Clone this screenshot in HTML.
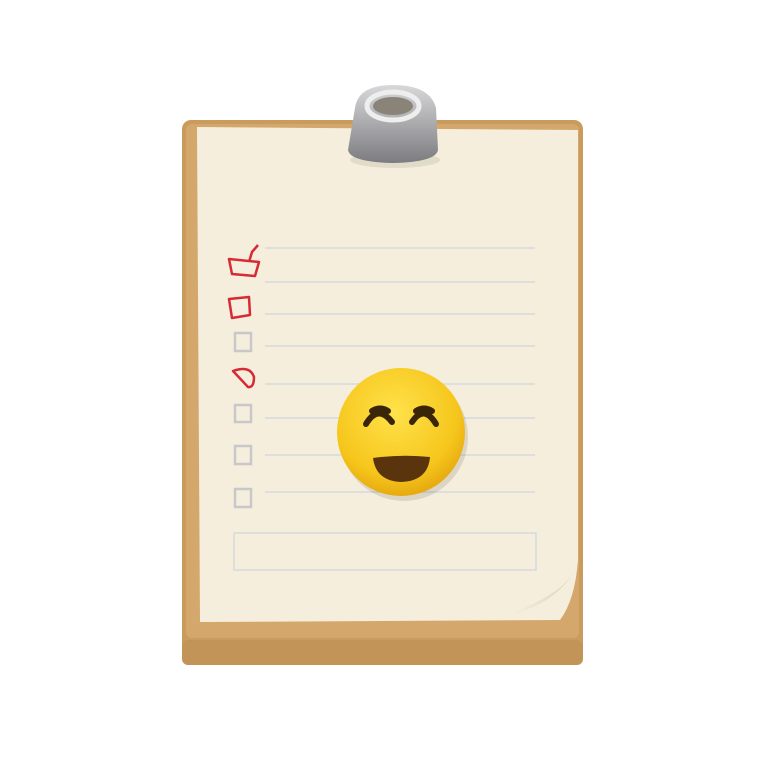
<!DOCTYPE html>
<html><head><style>html,body{margin:0;padding:0;background:#fff;width:768px;height:768px;overflow:hidden}</style></head>
<body>
<svg width="768" height="768" viewBox="0 0 768 768" xmlns="http://www.w3.org/2000/svg">
<defs>
<radialGradient id="face" cx="0.45" cy="0.35" r="0.7"><stop offset="0" stop-color="#ffe24a"/><stop offset="0.7" stop-color="#f6c61c"/><stop offset="1" stop-color="#e2a10c"/></radialGradient>
<linearGradient id="clip" x1="0" y1="0" x2="0" y2="1"><stop offset="0" stop-color="#d8d8da"/><stop offset="1" stop-color="#7c7c80"/></linearGradient>
<linearGradient id="curl" x1="0" y1="1" x2="1" y2="0"><stop offset="0" stop-color="#f4ecd8"/><stop offset="1" stop-color="#d8ccb0"/></linearGradient>
</defs>
<rect x="182" y="120" width="401" height="545" rx="9" fill="#c99c5e"/>
<rect x="182" y="640" width="401" height="25" rx="6" fill="#c39457"/>
<rect x="186" y="124" width="393" height="514" rx="6" fill="#d4a86c"/>
<path d="M197 127 L578 130 L578 560 Q575 600 560 620 L200 622 Z" fill="#f5eedc"/>
<path d="M580 560 Q562 602 512 614 Q548 598 562 586 Q574 575 580 560 Z" fill="url(#curl)"/>
<g stroke="#d5d8de" stroke-width="1.5">
<line x1="265" y1="248" x2="535" y2="248"/><line x1="265" y1="282" x2="535" y2="282"/>
<line x1="265" y1="314" x2="535" y2="314"/><line x1="265" y1="346" x2="535" y2="346"/>
<line x1="265" y1="384" x2="535" y2="384"/><line x1="265" y1="418" x2="535" y2="418"/>
<line x1="265" y1="455" x2="535" y2="455"/><line x1="265" y1="492" x2="535" y2="492"/>
</g>
<rect x="234" y="533" width="302" height="37" fill="none" stroke="#d5d8de" stroke-width="1.5"/>
<g fill="none" stroke="#d62a35" stroke-width="2.5" stroke-linejoin="round">
<path d="M229 259 L259 262 L255 276 L232 274 Z M249 262 L252 252 L258 245"/>
<path d="M229 299 L249 297 L250 315 L232 318 Z"/>
<path d="M233 371 Q250 365 254 377 Q254 388 248 387 Z"/>
</g>
<g fill="none" stroke="#c8c8ca" stroke-width="2.5">
<rect x="235" y="333" width="16" height="18"/><rect x="235" y="405" width="16" height="17"/>
<rect x="235" y="446" width="16" height="18"/><rect x="235" y="489" width="16" height="18"/>
</g>
<ellipse cx="395" cy="160" rx="45" ry="8" fill="#000" opacity="0.08"/>
<path d="M355 108 Q358 85 393 85 Q430 85 436 108 L438 150 Q436 162 393 163 Q350 162 348 150 Z" fill="url(#clip)"/>
<ellipse cx="393" cy="106" rx="26" ry="14" fill="none" stroke="#eee" stroke-width="5"/>
<ellipse cx="393" cy="106" rx="20" ry="9" fill="#8a8478"/>
<circle cx="404" cy="437" r="64" fill="#000" opacity="0.1"/>
<circle cx="401" cy="432" r="64" fill="url(#face)"/>
<g fill="none" stroke="#3a2508" stroke-width="6" stroke-linecap="round">
<path d="M366 424 Q378 404 392 422"/><path d="M412 422 Q424 404 436 424"/>
<path d="M372 411 Q380 406 388 411"/><path d="M416 411 Q424 406 432 411"/>
</g>
<path d="M373 458 Q402 454 430 457 Q428 481 401 482 Q376 481 373 458 Z" fill="#5a340c"/>
</svg>
</body></html>
